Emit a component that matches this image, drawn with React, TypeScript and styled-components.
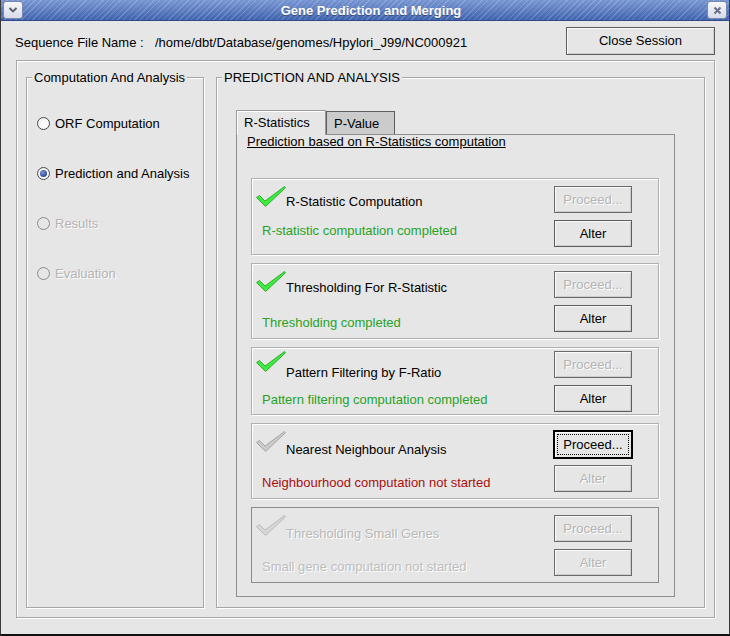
import React from "react";
import styled, { createGlobalStyle, css } from "styled-components";

const GlobalStyle = createGlobalStyle`
  html, body {
    margin: 0;
    padding: 0;
    background: #e6e6e6;
  }
  body {
    font-family: "Liberation Sans", Arial, sans-serif;
    font-size: 13px;
    color: #000;
  }
`;

const Window = styled.div`
  width: 730px;
  height: 636px;
  box-sizing: border-box;
  display: flex;
  flex-direction: column;
  background: #e6e6e6;
  border-left: 1px solid #3a3a3a;
  border-right: 1px solid #3a3a3a;
  border-bottom: 2px solid #111;
`;

const TitleBar = styled.div`
  height: 21px;
  box-sizing: border-box;
  display: flex;
  align-items: center;
  padding: 0 2px;
  border-bottom: 1px solid #2d4a8a;
  background: repeating-linear-gradient(
      135deg,
      rgba(255, 255, 255, 0.18) 0 1px,
      transparent 1px 4px
    ),
    linear-gradient(#7896d2, #4063ad);
`;

const TitleText = styled.div`
  flex: 1;
  text-align: center;
  padding-left: 12px;
  color: #fff;
  font-weight: bold;
  font-size: 13px;
  text-shadow: 0 1px 0 rgba(0, 0, 0, 0.35);
`;

const TitleButton = styled.div`
  width: 20px;
  height: 18px;
  box-sizing: border-box;
  border: 1px solid #7886b0;
  border-radius: 3px;
  background: linear-gradient(#f6f7fa, #d8dce8);
  display: flex;
  align-items: center;
  justify-content: center;
`;

const Header = styled.div`
  height: 39px;
  box-sizing: border-box;
  display: flex;
  align-items: center;
  padding: 0 14px;
`;

const HeaderLabel = styled.span`
  width: 140px;
  padding-top: 4px;
`;

const HeaderValue = styled.span`
  flex: 1;
  padding-top: 4px;
`;

const OuterPanel = styled.div`
  flex: 1;
  margin: 0 14px 16px 15px;
  padding: 16px 9px 9px 9px;
  border: 1px solid #a6a6a6;
  box-shadow: inset 1px 1px 0 #fff, 1px 1px 0 #fff;
  display: grid;
  grid-template-columns: 178px 1fr;
  column-gap: 12px;
`;

const GroupBox = styled.div`
  display: flex;
  flex-direction: column;
  border: 1px solid #a6a6a6;
  box-shadow: inset 1px 1px 0 #fff, 1px 1px 0 #fff;
`;

const GroupTitle = styled.span`
  align-self: flex-start;
  margin: -8px 0 0 5px;
  padding: 0 2px;
  line-height: 16px;
  font-size: 13px;
  background: #e6e6e6;
`;

const GroupBody = styled.div<{ $pad: string }>`
  flex: 1;
  display: flex;
  flex-direction: column;
  padding: ${({ $pad }) => $pad};
`;

const RadioRow = styled.div<{ $disabled?: boolean }>`
  height: 50px;
  display: flex;
  align-items: center;
  gap: 5px;
  color: ${({ $disabled }) => ($disabled ? "#b4b4b4" : "#000")};
  text-shadow: ${({ $disabled }) => ($disabled ? "1px 1px 0 #fff" : "none")};
`;

const RadioCircle = styled.span<{ $checked?: boolean; $disabled?: boolean }>`
  width: 13px;
  height: 13px;
  box-sizing: border-box;
  border-radius: 50%;
  border: 1px solid ${({ $disabled }) => ($disabled ? "#8a8a8a" : "#4a4a4a")};
  background: ${({ $disabled }) =>
    $disabled ? "#e6e6e6" : "radial-gradient(circle at 60% 65%, #fff, #ececec)"};
  display: flex;
  align-items: center;
  justify-content: center;

  &::after {
    content: "";
    display: ${({ $checked }) => ($checked ? "block" : "none")};
    width: 7px;
    height: 7px;
    border-radius: 50%;
    background: radial-gradient(circle at 40% 35%, #7d95d6, #2b4a9c 70%);
  }
`;

const Tabs = styled.div`
  display: flex;
  align-items: flex-end;
  height: 24px;
`;

const Tab = styled.div<{ $active?: boolean; $w: number }>`
  width: ${({ $w }) => $w}px;
  box-sizing: border-box;
  padding-left: 7px;
  display: flex;
  align-items: center;
  ${({ $active }) =>
    $active
      ? css`
          height: 25px;
          margin-bottom: -1px;
          position: relative;
          z-index: 1;
          background: #e6e6e6;
          border: 1px solid #9a9a9a;
          border-bottom: none;
          box-shadow: inset 1px 1px 0 #fff;
          padding-bottom: 2px;
        `
      : css`
          height: 23px;
          background: #cbcbcb;
          border: 1px solid #5e5e5e;
          border-bottom: none;
          padding-top: 1px;
        `}
`;

const TabPane = styled.div`
  flex: 1;
  display: flex;
  flex-direction: column;
  border: 1px solid #8e8e8e;
  padding: 0 15px 0 14px;
`;

const PaneHeading = styled.div`
  margin-left: -4px;
  line-height: 14px;
  text-decoration: underline;
`;

const StepList = styled.div`
  margin-top: 29px;
  display: flex;
  flex-direction: column;
  gap: 8px;
`;

const StepBox = styled.div<{ $h: number; $disabled?: boolean }>`
  height: ${({ $h }) => $h}px;
  box-sizing: border-box;
  padding: 0 26px 0 4px;
  display: grid;
  grid-template-columns: 1fr 78px;
  grid-template-rows: 27px 27px;
  row-gap: 7px;
  align-content: center;
  ${({ $disabled }) =>
    $disabled
      ? css`
          border: 1px solid #8c8c8c;
        `
      : css`
          border: 1px solid #b0b0b0;
          box-shadow: inset 1px 1px 0 #fff, 1px 1px 0 #fff;
        `}
`;

const StepTitleRow = styled.div`
  grid-column: 1;
  grid-row: 1;
  display: flex;
  align-items: flex-end;
`;

const CheckIcon = styled.svg`
  width: 30px;
  height: 21px;
  margin-bottom: 6px;
  flex-shrink: 0;
`;

const StepTitle = styled.span<{ $disabled?: boolean; $shift: number }>`
  line-height: 15px;
  margin-bottom: ${({ $shift }) => 3 - $shift}px;
  color: ${({ $disabled }) => ($disabled ? "#b8b8b8" : "#000")};
  text-shadow: ${({ $disabled }) => ($disabled ? "1px 1px 0 #fff" : "none")};
`;

const StepStatus = styled.span<{ $tone: Tone; $shift: number }>`
  grid-column: 1;
  grid-row: 2;
  align-self: start;
  padding: ${({ $shift }) => 6 + $shift}px 0 0 6px;
  line-height: 15px;
  color: ${({ $tone }) =>
    $tone === "done" ? "#26a326" : $tone === "todo" ? "#a80f0f" : "#bdbdbd"};
  text-shadow: ${({ $tone }) => ($tone === "off" ? "1px 1px 0 #fff" : "none")};
`;

const ButtonColumn = styled.div`
  grid-column: 2;
  grid-row: 1 / span 2;
  display: flex;
  flex-direction: column;
  gap: 7px;
`;

const Button = styled.button<{ $focused?: boolean; $w?: number; $h?: number }>`
  width: ${({ $w }) => $w ?? 78}px;
  height: ${({ $h }) => $h ?? 27}px;
  box-sizing: border-box;
  padding: 0;
  font-family: "Liberation Sans", Arial, sans-serif;
  font-size: 13px;
  color: #000;
  background: #e6e6e6;
  border: 1px solid #5c5c5c;
  box-shadow: inset 1px 1px 0 #fafafa, inset -1px -1px 0 #cdcdcd;

  &:disabled {
    color: #b4b4b4;
    text-shadow: 1px 1px 0 #fff;
    border-color: #6a6a6a;
  }

  ${({ $focused }) =>
    $focused &&
    css`
      border-color: #000;
      box-shadow: 0 0 0 1px #000, inset 1px 1px 0 #fafafa;
      outline: 1px dotted #000;
      outline-offset: -4px;
    `}
`;

type Tone = "done" | "todo" | "off";

const checkColors: Record<Tone, [string, string]> = {
  done: ["#3fea3f", "#1e9e1e"],
  todo: ["#cacaca", "#9c9c9c"],
  off: ["#d6d6d6", "#b2b2b2"],
};

function Check({ tone }: { tone: Tone }) {
  const [fill, edge] = checkColors[tone];
  return (
    <CheckIcon viewBox="0 0 30 21">
      <path
        d="M0.5 11.5 L3.5 9.5 L9 15 L28.5 0.5 L29.5 1.8 L9.5 20.5 Z"
        fill={fill}
        stroke={edge}
        strokeWidth="0.8"
        strokeLinejoin="round"
      />
    </CheckIcon>
  );
}

type Step = {
  title: string;
  status: string;
  tone: Tone;
  height: number;
  titleShift: number;
  statusShift: number;
  proceed: "off" | "on" | "focus";
  alter: boolean;
};

const steps: Step[] = [
  {
    title: "R-Statistic Computation",
    status: "R-statistic computation completed",
    tone: "done",
    height: 77,
    titleShift: -1,
    statusShift: -3,
    proceed: "off",
    alter: true,
  },
  {
    title: "Thresholding For R-Statistic",
    status: "Thresholding completed",
    tone: "done",
    height: 76,
    titleShift: 0,
    statusShift: 4,
    proceed: "off",
    alter: true,
  },
  {
    title: "Pattern Filtering by F-Ratio",
    status: "Pattern filtering computation completed",
    tone: "done",
    height: 68,
    titleShift: 5,
    statusShift: 1,
    proceed: "off",
    alter: true,
  },
  {
    title: "Nearest Neighbour Analysis",
    status: "Neighbourhood computation not started",
    tone: "todo",
    height: 76,
    titleShift: 2,
    statusShift: 4,
    proceed: "focus",
    alter: false,
  },
  {
    title: "Thresholding Small Genes",
    status: "Small gene computation not started",
    tone: "off",
    height: 76,
    titleShift: 2,
    statusShift: 4,
    proceed: "off",
    alter: false,
  },
];

const modes = [
  { label: "ORF Computation", checked: false, disabled: false },
  { label: "Prediction and Analysis", checked: true, disabled: false },
  { label: "Results", checked: false, disabled: true },
  { label: "Evaluation", checked: false, disabled: true },
];

export default function App() {
  return (
    <>
      <GlobalStyle />
      <Window>
        <TitleBar>
          <TitleButton>
            <svg width="10" height="8" viewBox="0 0 10 8">
              <path d="M1.5 2 L5 5.5 L8.5 2" fill="none" stroke="#555c70" strokeWidth="1.8" />
            </svg>
          </TitleButton>
          <TitleText>Gene Prediction and Merging</TitleText>
          <TitleButton>
            <svg width="9" height="9" viewBox="0 0 9 9">
              <path d="M1.5 1.5 L7.5 7.5 M7.5 1.5 L1.5 7.5" stroke="#6a7086" strokeWidth="2" />
            </svg>
          </TitleButton>
        </TitleBar>

        <Header>
          <HeaderLabel>Sequence File Name :</HeaderLabel>
          <HeaderValue>/home/dbt/Database/genomes/Hpylori_J99/NC000921</HeaderValue>
          <Button $w={149} $h={28}>Close Session</Button>
        </Header>

        <OuterPanel>
          <GroupBox>
            <GroupTitle>Computation And Analysis</GroupTitle>
            <GroupBody $pad="12px 0 0 10px">
              {modes.map((m) => (
                <RadioRow key={m.label} $disabled={m.disabled}>
                  <RadioCircle $checked={m.checked} $disabled={m.disabled} />
                  {m.label}
                </RadioRow>
              ))}
            </GroupBody>
          </GroupBox>

          <GroupBox>
            <GroupTitle>PREDICTION AND ANALYSIS</GroupTitle>
            <GroupBody $pad="24px 29px 10px 19px">
              <Tabs>
                <Tab $active $w={90}>R-Statistics</Tab>
                <Tab $w={69}>P-Value</Tab>
              </Tabs>
              <TabPane>
                <PaneHeading>Prediction based on R-Statistics computation</PaneHeading>
                <StepList>
                  {steps.map((s) => (
                    <StepBox key={s.title} $h={s.height} $disabled={s.tone === "off"}>
                      <StepTitleRow>
                        <Check tone={s.tone} />
                        <StepTitle $disabled={s.tone === "off"} $shift={s.titleShift}>
                          {s.title}
                        </StepTitle>
                      </StepTitleRow>
                      <StepStatus $tone={s.tone} $shift={s.statusShift}>
                        {s.status}
                      </StepStatus>
                      <ButtonColumn>
                        <Button disabled={s.proceed === "off"} $focused={s.proceed === "focus"}>
                          Proceed...
                        </Button>
                        <Button disabled={!s.alter}>Alter</Button>
                      </ButtonColumn>
                    </StepBox>
                  ))}
                </StepList>
              </TabPane>
            </GroupBody>
          </GroupBox>
        </OuterPanel>
      </Window>
    </>
  );
}
